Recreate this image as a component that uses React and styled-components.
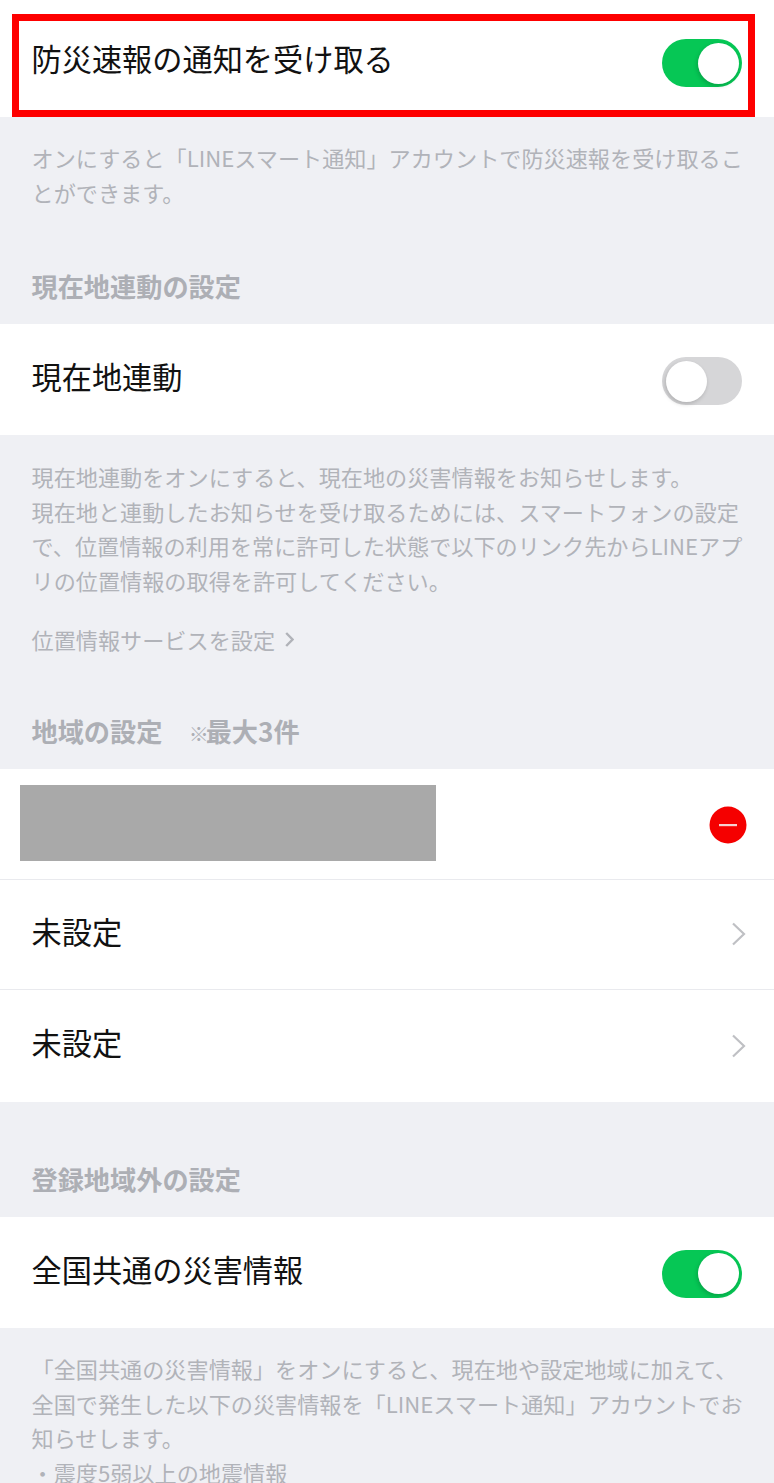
import React from 'react';
import styled, { createGlobalStyle } from 'styled-components';

const GlobalStyle = createGlobalStyle`
  html, body {
    margin: 0;
    padding: 0;
    background: #eff0f4;
    font-family: "Noto Sans CJK JP", "Noto Sans", sans-serif;
  }
  body {
    height: 1483px;
    overflow: hidden;
  }
`;

const Page = styled.div`
  width: 774px;
  height: 1483px;
  overflow: hidden;
  position: relative;
  background: #eff0f4;
`;

const TopSection = styled.section`
  background: #fff;
  padding-top: 6px;
`;

const Group = styled.section`
  background: #fff;
`;

const Row = styled.div`
  height: ${(p) => p.$height || 111}px;
  box-sizing: border-box;
  padding: 0 32px 0 31.5px;
  display: flex;
  align-items: center;
  justify-content: space-between;
  border-top: ${(p) => (p.$divided ? '1px solid #e9eaee' : 'none')};
`;

const RowLabel = styled.span`
  font-size: 30.2px;
  line-height: 40px;
  color: #111;
  margin-top: -7px;
`;

const Track = styled.span`
  width: 80px;
  height: 48px;
  box-sizing: border-box;
  margin-top: 3px;
  padding: 3.5px;
  border-radius: 24px;
  display: flex;
  justify-content: ${(p) => (p.$on ? 'flex-end' : 'flex-start')};
  background: ${(p) => (p.$on ? '#06c755' : '#d6d6d8')};
`;

const Knob = styled.span`
  width: 41px;
  height: 41px;
  border-radius: 50%;
  background: #fff;
  box-shadow: -1px 2px 4px rgba(0, 0, 0, 0.18);
`;

const Note = styled.p`
  margin: 0;
  padding: ${(p) => p.$top}px 32px 0 31.5px;
  font-size: 22.15px;
  line-height: 34.7px;
  color: #b1b3b9;
  white-space: nowrap;
`;

const SectionTitle = styled.h2`
  margin: 0;
  padding: ${(p) => p.$top}px 32px 19.6px 31.5px;
  font-size: 26.2px;
  line-height: 35px;
  font-weight: 700;
  color: #adafb5;
  white-space: pre;
`;

const TitleMark = styled.span`
  font-size: 20px;
  line-height: 1;
  letter-spacing: -3px;
`;

const SettingLink = styled.div`
  padding: 23.8px 32px 0 31.5px;
  display: flex;
  align-items: center;
  gap: 10px;
  font-size: 22.15px;
  line-height: 34px;
  color: #b1b3b9;
`;

const MaskedRow = styled.div`
  height: 110px;
  box-sizing: border-box;
  padding: 16px 27px 0 20px;
  display: flex;
  justify-content: space-between;
`;

const MaskedName = styled.div`
  width: 416px;
  height: 76px;
  background: #a9a9a9;
`;

const RemoveIcon = styled.svg`
  width: 38px;
  height: 38px;
  margin-top: 21px;
`;

const RowChevron = styled.svg`
  width: 15px;
  height: 24px;
  margin-right: -4px;
`;

const LinkChevron = styled.svg`
  width: 9px;
  height: 15px;
  margin-top: 1px;
`;

const Highlight = styled.div`
  position: absolute;
  left: 12px;
  top: 14px;
  width: 743px;
  height: 103px;
  box-sizing: border-box;
  border: 7.5px solid #fe0000;
  pointer-events: none;
`;

const Toggle = ({ on }) => (
  <Track $on={on}>
    <Knob />
  </Track>
);

const Chevron = () => (
  <RowChevron viewBox="0 0 15 24" fill="none">
    <path d="M2 1.5L13 12L2 22.5" stroke="#bfc0c4" strokeWidth="2.2" />
  </RowChevron>
);

const App = () => (
  <Page>
    <GlobalStyle />
    <TopSection>
      <Row>
        <RowLabel>防災速報の通知を受け取る</RowLabel>
        <Toggle on />
      </Row>
    </TopSection>
    <Note $top={23}>
      オンにすると「LINEスマート通知」アカウントで防災速報を受け取るこ
      <br />
      とができます。
    </Note>
    <SectionTitle $top={60}>現在地連動の設定</SectionTitle>
    <Group>
      <Row>
        <RowLabel>現在地連動</RowLabel>
        <Toggle />
      </Row>
    </Group>
    <Note $top={24}>
      現在地連動をオンにすると、現在地の災害情報をお知らせします。
      <br />
      現在地と連動したお知らせを受け取るためには、スマートフォンの設定
      <br />
      で、位置情報の利用を常に許可した状態で以下のリンク先からLINEアプ
      <br />
      リの位置情報の取得を許可してください。
    </Note>
    <SettingLink>
      位置情報サービスを設定
      <LinkChevron viewBox="0 0 9 15" fill="none">
        <path d="M1.2 1L7.5 7.5L1.2 14" stroke="#b1b3b9" strokeWidth="2.4" />
      </LinkChevron>
    </SettingLink>
    <SectionTitle $top={58.5}>
      地域の設定　<TitleMark>※</TitleMark>最大3件
    </SectionTitle>
    <Group>
      <MaskedRow>
        <MaskedName />
        <RemoveIcon viewBox="0 0 38 38">
          <circle cx="19" cy="19" r="18.5" fill="#f50000" />
          <rect x="10" y="18" width="18" height="2.2" fill="#f6d0d0" />
        </RemoveIcon>
      </MaskedRow>
      <Row $divided $height={110}>
        <RowLabel>未設定</RowLabel>
        <Chevron />
      </Row>
      <Row $divided $height={113}>
        <RowLabel>未設定</RowLabel>
        <Chevron />
      </Row>
    </Group>
    <SectionTitle $top={60.5}>登録地域外の設定</SectionTitle>
    <Group>
      <Row>
        <RowLabel>全国共通の災害情報</RowLabel>
        <Toggle on />
      </Row>
    </Group>
    <Note $top={23}>
      「全国共通の災害情報」をオンにすると、現在地や設定地域に加えて、
      <br />
      全国で発生した以下の災害情報を「LINEスマート通知」アカウントでお
      <br />
      知らせします。
      <br />
      ・震度5弱以上の地震情報
    </Note>
    <Highlight />
  </Page>
);

export default App;
